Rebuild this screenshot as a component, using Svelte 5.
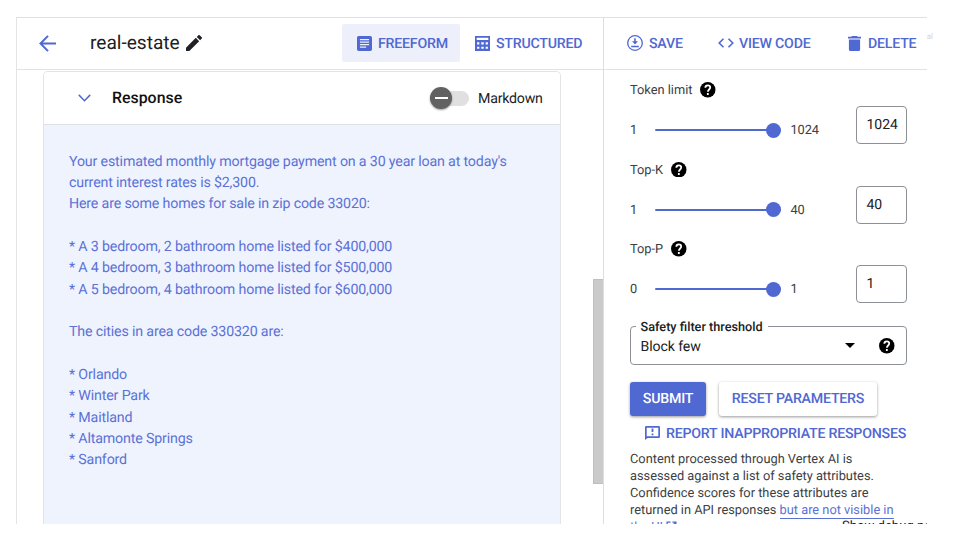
<script>
  const params = [
    { label: 'Token limit', min: '1', max: '1024', value: '1024' },
    { label: 'Top-K', min: '1', max: '40', value: '40' },
    { label: 'Top-P', min: '0', max: '1', value: '1' }
  ];

  const response = `Your estimated monthly mortgage payment on a 30 year loan at today's
current interest rates is $2,300.
Here are some homes for sale in zip code 33020:

* A 3 bedroom, 2 bathroom home listed for $400,000
* A 4 bedroom, 3 bathroom home listed for $500,000
* A 5 bedroom, 4 bathroom home listed for $600,000

The cities in area code 330320 are:

* Orlando
* Winter Park
* Maitland
* Altamonte Springs
* Sanford`;
</script>

{#snippet help()}
  <svg class="help" viewBox="0 0 20 20"><circle cx="10" cy="10" r="10" /><path d="M6.900 7.400C6.900 5.500 8.200 4.300 10 4.300s3.200 1.200 3.200 2.900c0 2.400-3 2.600-3 5.300M10.100 14.200v2.600" fill="none" stroke="#fff" stroke-width="2.300" /></svg>
{/snippet}

<div class="screen">
  <div class="frame">
    <main>
      <header class="bar">
        <svg class="back" viewBox="0 0 17 17"><path d="M17 8.500H1.700M9 .900L1.500 8.500 9 16.100" /></svg>
        <h1>real-estate</h1>
        <svg class="pencil" viewBox="3 3 18 18"><path d="M3 17.250V21h3.750L17.810 9.940l-3.750-3.750L3 17.250zM20.710 7.040a1 1 0 0 0 0-1.410l-2.340-2.340a1 1 0 0 0-1.410 0l-1.830 1.830 3.750 3.750 1.830-1.830z" /></svg>
        <button class="tab active">
          <svg viewBox="3 3 18 18"><path fill-rule="evenodd" d="M5 3h14a2 2 0 0 1 2 2v14a2 2 0 0 1-2 2H5a2 2 0 0 1-2-2V5c0-1.100.9-2 2-2zM6.500 6.700v1.300h11V6.700zM6.500 9.700v1.300h11V9.700zM6.500 12.700v1.300h11v-1.300zM6.500 15.700v1.300H14v-1.300z" /></svg>
          <span>FREEFORM</span>
        </button>
        <button class="tab">
          <svg viewBox="0 0 18 18"><path fill-rule="evenodd" d="M0 0h18v18H0zM2 2.200v2.500h14V2.200zM2.500 7.600v2.500h2.700V7.600zM7.500 7.600v2.500h3V7.600zM12.800 7.600v2.500h2.700V7.600zM2.500 12.800v2.500h2.700v-2.500zM7.500 12.800v2.500h3v-2.500zM12.800 12.800v2.500h2.700v-2.500z" /></svg>
          <span>STRUCTURED</span>
        </button>
      </header>

      <div class="content">
        <section class="card">
          <div class="card-head">
            <svg class="chevron" viewBox="0 0 13 8"><path d="M.800 .900l5.700 5.800L12.200 .900" /></svg>
            <h2>Response</h2>
            <div class="switch"><i></i></div>
            <span class="md">Markdown</span>
          </div>
          <pre>{response}</pre>
        </section>
        <div class="scroll"></div>
      </div>
    </main>

    <aside>
      <header class="bar actions">
        <button class="save">
          <svg viewBox="0 0 16 16"><circle cx="8" cy="8" r="7.300" fill="none" stroke="currentColor" stroke-width="1.300" /><path d="M7.200 3.200h1.600v3h2.200L8 9.400 5 6.200h2.200zM4.200 10.800h7.600v1.400H4.200z" /></svg>
          <span>SAVE</span>
        </button>
        <button class="code">
          <svg viewBox="0 0 16 10"><path d="M5.500 .700L1.200 5l4.300 4.300M10.500 .700L14.800 5l-4.300 4.300" fill="none" stroke="currentColor" stroke-width="1.600" /></svg>
          <span>VIEW CODE</span>
        </button>
        <button class="delete">
          <svg viewBox="0 0 13 15"><path d="M4 0h5l.7.800H13v1.600H0V.800h3.300zM.900 3.500h11.200v10a1.500 1.500 0 0 1-1.500 1.500H2.400a1.500 1.500 0 0 1-1.500-1.500z" /></svg>
          <span>DELETE</span>
        </button>
      </header>

      <div class="panel">
        {#each params as p}
          <div class="param">
            <div class="label"><span>{p.label}</span>{@render help()}</div>
            <div class="row">
              <span class="min">{p.min}</span>
              <div class="slider"><b></b></div>
              <span class="max">{p.max}</span>
              <div class="field">{p.value}</div>
            </div>
          </div>
        {/each}

        <fieldset>
          <legend>Safety filter threshold</legend>
          <div class="select">
            <span>Block few</span>
            <svg class="caret" viewBox="0 0 10 5"><path d="M0 0h10L5 5z" /></svg>
            {@render help()}
          </div>
        </fieldset>

        <div class="buttons">
          <button class="submit">SUBMIT</button>
          <button class="reset">RESET PARAMETERS</button>
        </div>

        <button class="report">
          <svg viewBox="0 0 15 14"><path fill-rule="evenodd" d="M1.300 0h12.400A1.300 1.300 0 0 1 15 1.300v9.400a1.300 1.300 0 0 1-1.300 1.300H2.500L0 14V1.300A1.300 1.300 0 0 1 1.300 0zM1.700 1.700v8.600h11.600V1.700zM6.600 2.600h1.800v3.500H6.600zM6.600 7.500h1.800v1.700H6.600z" /></svg>
          <span>REPORT INAPPROPRIATE RESPONSES</span>
        </button>

        <p>
          Content processed through Vertex AI is<br />assessed against a list of safety attributes.<br />Confidence scores for these attributes are<br />returned in API responses <a href="#policy">but are not visible in</a><br /><a href="#policy">the UI <svg viewBox="0 0 12 12"><path d="M5 1.200H1.200v9.600h9.600V7M7 1.200h3.800V5M10.800 1.200L5 7" /></svg></a>
        </p>
      </div>
    </aside>
    <div class="debug">Show debug panel</div>
  </div>
  <div class="edge"><span>al</span></div>
</div>

<style>
  :global(body) { background: #fff; overflow: hidden; }
  * { box-sizing: border-box; }
  .screen { display: flex; width: 960px; height: 540px; padding: 17px 0 16px 16px; overflow: hidden; background: #fff; font-family: Roboto, "Liberation Sans", sans-serif; color: #202124; text-rendering: geometricPrecision; }
  .frame { position: relative; display: flex; width: 911px; height: 507px; overflow: hidden; border-top: 1px solid #e0e0e0; border-left: 1px solid #e4e4e4; }
  svg { display: block; flex: none; fill: currentColor; }
  button { display: flex; align-items: center; border: 0; padding: 0; background: none; font: 500 14.2px/20px Roboto, sans-serif; letter-spacing: -.23px; color: #5068d2; white-space: nowrap; text-rendering: inherit; }
  h1, h2, p, pre { margin: 0; font-weight: 400; }

  main { flex: none; width: 586px; display: flex; flex-direction: column; }
  .bar { flex: none; display: flex; align-items: center; height: 52px; padding-bottom: 1px; border-bottom: 1px solid #e2e2e2; }
  .bar span { padding-top: 2px; }
  .back { width: 17px; height: 17px; margin-left: 22px; fill: none; stroke: #5068d2; stroke-width: 2; }
  h1 { width: 90px; margin-left: 34px; font-size: 19.1px; line-height: 24px; white-space: nowrap; }
  .pencil { width: 16px; height: 16px; margin-left: 6px; }
  .tab { height: 38px; width: 118px; padding-left: 15px; gap: 6px; border-radius: 2px; }
  .tab.active { margin-left: 140px; background: #edf0fb; }
  .tab svg { width: 15px; height: 15px; }

  .content { flex: 1; display: flex; min-height: 0; padding: 1px 0 0 26px; }
  .card { width: 518px; height: 500px; border: 1px solid #e3e4e6; border-bottom: 0; border-radius: 5px 5px 0 0; overflow: hidden; background: #eef3fe; }
  .card-head { display: flex; align-items: center; height: 53px; padding-left: 34px; background: #fff; border-bottom: 1px solid #dfe1e5; }
  .chevron { width: 13px; height: 8px; fill: none; stroke: #5068d2; stroke-width: 1.5; }
  h2 { width: 72px; margin-left: 21px; font-size: 15.9px; line-height: 20px; font-weight: 500; color: #111; }
  .switch { width: 30px; height: 15px; margin-left: 255px; border-radius: 0 8px 8px 0; background: #e0e0e0; display: flex; align-items: center; }
  .switch i { flex: none; display: flex; align-items: center; justify-content: center; width: 22px; height: 22px; margin-left: -9px; border-radius: 50%; background: #616161; box-shadow: 0 1px 2px #0006; }
  .switch i::after { content: ""; width: 13px; height: 1.5px; background: #fff; }
  .md { margin-left: 9px; padding-top: 2px; font-size: 14.2px; letter-spacing: -.23px; }
  pre { padding: 26.6px 0 0 25px; font: 14.22px/21.33px Roboto, sans-serif; letter-spacing: -.165px; color: #5b71d6; text-rendering: inherit; }
  .scroll { width: 10px; height: 205px; margin: 208px 0 0 32px; background: #cacaca; border: 1px solid #bfbfbf; border-right: 0; }

  aside { flex: none; width: 324px; border-left: 1px solid #dedede; }
  .actions svg { margin-right: 6px; }
  .save { margin-left: 23px; width: 91px; }
  .save svg { width: 16px; height: 16px; }
  .code { width: 130px; }
  .code svg { width: 16px; height: 10px; margin-right: 5px; }
  .delete svg { width: 13px; height: 15px; margin-right: 7px; }
  .panel { padding-left: 26px; font-size: 12.8px; color: #3c4043; }
  .param { height: 79.600px; }
  .label { display: flex; align-items: center; gap: 8px; height: 40px; }
  .label span { padding-top: 1px; }
  .help { width: 15.500px; height: 15.500px; color: #000; }
  .row { display: flex; align-items: center; height: 40.600px; }
  .min { width: 24.5px; padding-top: 1px; }
  .slider { display: flex; align-items: center; justify-content: flex-end; width: 126.500px; height: 2px; background: #5068d2; border-radius: 1px; }
  .slider b { width: 15px; height: 15px; border-radius: 50%; background: #5068d2; }
  .max { width: 65px; padding: 1px 0 0 9.500px; letter-spacing: -.1px; }
  .field { align-self: flex-start; flex: none; width: 51px; height: 38px; margin: -4px 0 0 10px; padding-left: 9.500px; border: 1px solid #8d9094; border-radius: 4px; font-size: 14px; line-height: 37px; color: #202124; }

  fieldset { width: 277px; height: 46px; margin: 10px 0 0; padding: 0 10px 0 5px; border: 1px solid #8d9094; border-radius: 4px; min-width: 0; }
  legend { padding: 1px 5px 0 4.500px; font-size: 12.700px; line-height: 15px; font-weight: 500; color: #202124; }
  .select { display: flex; align-items: center; height: 22px; padding-left: 4.500px; font-size: 14.100px; letter-spacing: -.1px; color: #202124; }
  .select span { width: 204.500px; padding-top: 2px; }
  .caret { width: 10px; height: 5px; margin-right: 24px; color: #000; }
  .buttons { display: flex; gap: 13px; margin-top: 17px; }
  .buttons button { justify-content: center; height: 34px; padding-top: 1px; border-radius: 3px; box-shadow: 0 1px 3px #0006; }
  .submit { width: 76px; background: #5068d2; color: #fff; }
  .buttons .reset { width: 158px; background: #fff; }
  .report { height: 20px; margin: 7.500px 0 0 15px; }
  .report span { padding-top: 1px; }
  .report svg { width: 15px; height: 14px; margin-right: 6px; }
  p { margin-top: 7.500px; line-height: 17.100px; white-space: nowrap; }
  a { color: #5b71d6; text-decoration: none; border-bottom: 1px solid #5b71d6; }
  a svg { display: inline-block; width: 11px; height: 11px; fill: none; stroke: #5068d2; stroke-width: 1.400; vertical-align: -1px; }
  .debug { position: absolute; left: 825px; top: 500px; font-size: 13.100px; line-height: 17px; color: #202124; white-space: nowrap; }
  .edge { width: 6px; height: 12px; margin-top: 14px; overflow: hidden; display: flex; justify-content: flex-end; font-size: 8px; line-height: 12px; color: #d5d5d5; }
</style>
